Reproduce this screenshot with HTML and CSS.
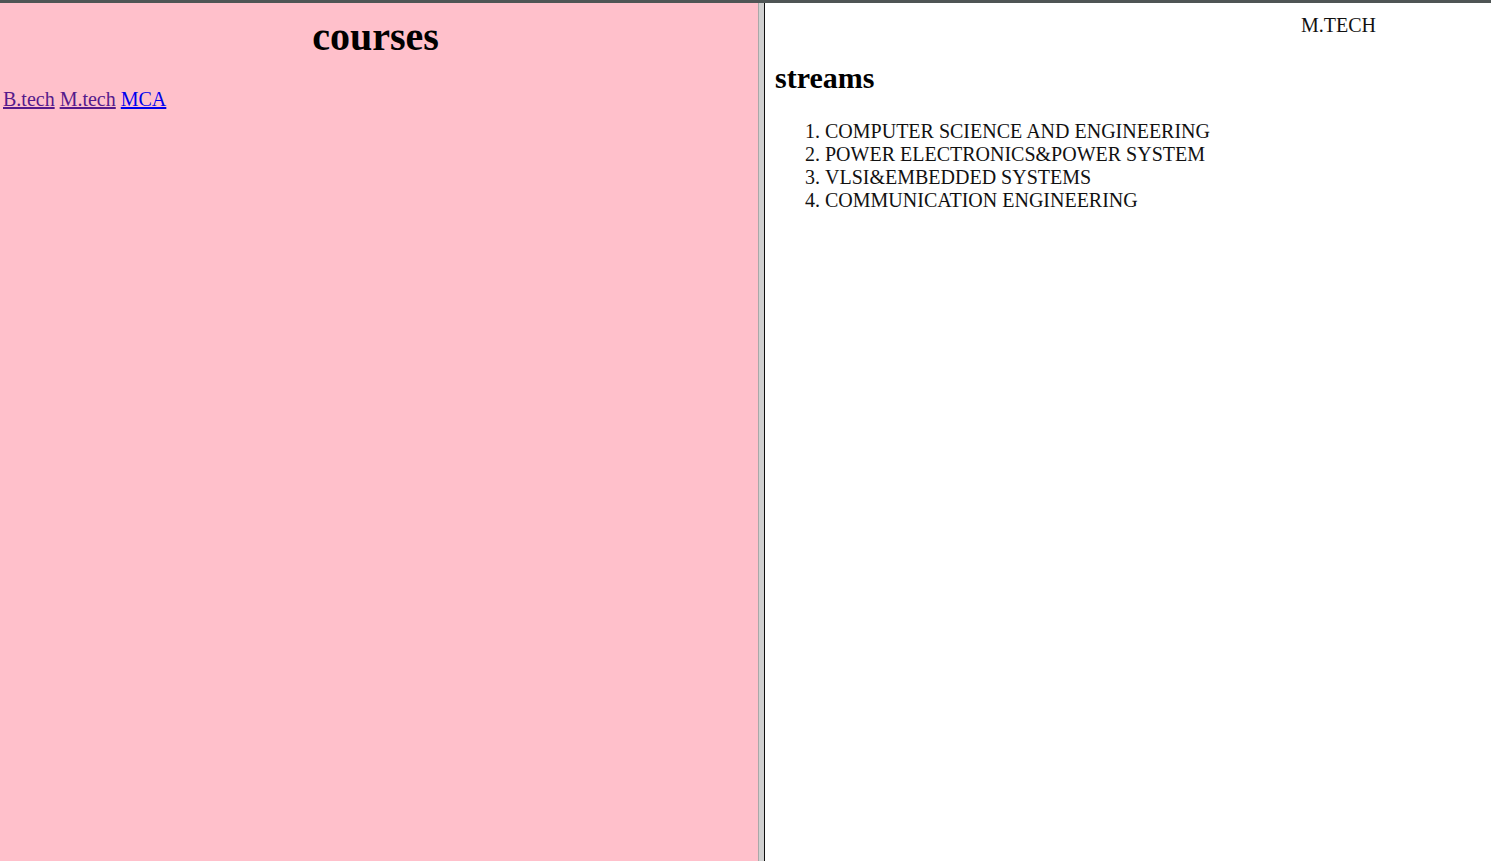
FILE: index.html
```html
<!DOCTYPE html>
<html>
<head>
<meta charset="utf-8">
<title>courses</title>
<link rel="stylesheet" href="styles.css">
</head>
<body>
<div class="topbar"></div>
<div class="frames">
  <div class="left">
    <h1 class="title">courses</h1>
    <p class="links"><a class="visited" href="#">B.tech</a> <a class="visited" href="#">M.tech</a> <a class="fresh" href="#">MCA</a></p>
  </div>
  <div class="divider"></div>
  <div class="right">
    <div class="marquee">M.TECH</div>
    <h2 class="streams">streams</h2>
    <ol class="list">
      <li>COMPUTER SCIENCE AND ENGINEERING</li>
      <li>POWER ELECTRONICS&amp;POWER SYSTEM</li>
      <li>VLSI&amp;EMBEDDED SYSTEMS</li>
      <li>COMMUNICATION ENGINEERING</li>
    </ol>
  </div>
</div>
</body>
</html>
```
FILE: styles.css
```css
html, body {
  margin: 0;
  padding: 0;
  height: 100%;
}
body {
  font-family: "Liberation Serif", "Times New Roman", serif;
  font-size: 20px;
  color: #000;
  display: flex;
  flex-direction: column;
  overflow: hidden;
}
.topbar {
  height: 3px;
  background: #4f5555;
  flex: none;
}
.frames {
  flex: 1;
  display: flex;
  min-height: 0;
}
.left {
  width: 758px;
  flex: none;
  background: #ffc0cb;
  padding: 0 10px 0 3px;
  box-sizing: border-box;
}
.title {
  margin: 11px 0 0;
  font-size: 40px;
  line-height: 46px;
  font-weight: bold;
  text-align: center;
}
.links {
  margin: 28px 0 0;
  line-height: 23px;
}
.links a.visited { color: #551a8b; }
.links a.fresh { color: #0000ee; }
.divider {
  width: 5px;
  flex: none;
  background: #d0d0d0;
  border-left: 1px solid #a8a8a8;
  border-right: 1px solid #111;
}
.right {
  flex: 1;
  background: #fff;
  padding: 11px 10px 10px;
}
.marquee {
  padding-left: 526px;
  line-height: 23px;
  color: #111;
}
.streams {
  margin: 23px 0 0;
  font-size: 30px;
  line-height: 35px;
  font-weight: bold;
}
.list {
  margin: 25px 0 0;
  padding-left: 50px;
  line-height: 23px;
  color: #111;
}
```
